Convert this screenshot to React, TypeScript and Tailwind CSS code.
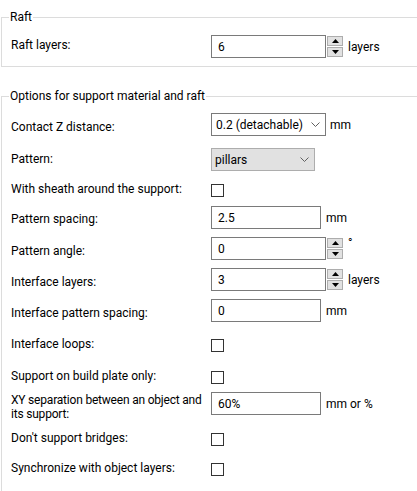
import React from 'react';

const Chevron = () => (
  <svg width="9" height="5" viewBox="0 0 9 5" className="shrink-0">
    <path d="M0.5 0.5 L4.5 4.5 L8.5 0.5" fill="none" stroke="#606060" strokeWidth="1" />
  </svg>
);

const Spin = () => (
  <div className="ml-[1px] flex flex-col gap-[1px]">
    <div className="flex h-[10px] w-[16px] items-center justify-center border border-[#adadad] bg-[#e1e1e1]">
      <svg width="7" height="4" viewBox="0 0 7 4"><path d="M0 4 L3.5 0 L7 4 Z" fill="#000" /></svg>
    </div>
    <div className="flex h-[10px] w-[16px] items-center justify-center border border-[#adadad] bg-[#e1e1e1]">
      <svg width="7" height="4" viewBox="0 0 7 4"><path d="M0 0 L3.5 4 L7 0 Z" fill="#000" /></svg>
    </div>
  </div>
);

const TextBox = ({ value, w }: { value: string; w: string }) => (
  <div className={`flex h-[23px] items-center border border-[#7a7a7a] bg-white px-[6px] ${w}`}>{value}</div>
);

const Check = () => <div className="h-[13px] w-[13px] border border-[#333333] bg-white" />;

const Unit = ({ children }: { children: React.ReactNode }) => (
  <span className="ml-[5px] leading-[16px]">{children}</span>
);

interface RowProps {
  label: React.ReactNode;
  h: string;
  lPt?: string;
  cPt?: string;
  children: React.ReactNode;
}

const Row = ({ label, h, lPt = '', cPt = '', children }: RowProps) => (
  <div className={`flex ${h}`}>
    <div className={`w-[200px] shrink-0 leading-[16px] ${lPt}`}>{label}</div>
    <div className={`flex items-center self-start ${cPt}`}>{children}</div>
  </div>
);

export default function App() {
  return (
    <div className="h-[491px] w-[417px] overflow-hidden bg-white text-[12px] text-black" style={{ fontFamily: 'Roboto, "Noto Sans", sans-serif' }}>
      <fieldset className="ml-[1px] mt-[9px] border border-r-0 border-[#dcdcdc] pb-[8px] pl-[9px] pt-[10px]">
        <legend className="ml-[-2px] px-[1px] leading-[16px]">Raft</legend>
        <Row label="Raft layers:" h="h-[23px]" lPt="pt-[2px]">
          <TextBox value="6" w="w-[115px]" />
          <Spin />
          <Unit>layers</Unit>
        </Row>
      </fieldset>

      <fieldset className="ml-[1px] mt-[21px] border border-b-0 border-r-0 border-[#dcdcdc] pl-[9px] pt-[9px]">
        <legend className="ml-[-2px] px-[1px] leading-[16px]">Options for support material and raft</legend>

        <Row label="Contact Z distance:" h="h-[35px]" lPt="pt-[6px]">
          <div className="flex h-[23px] w-[115px] items-center justify-between border border-[#7a7a7a] bg-white pl-[4px] pr-[5px]">
            <span>0.2 (detachable)</span>
            <Chevron />
          </div>
          <span className="ml-[4px] leading-[16px]">mm</span>
        </Row>

        <Row label="Pattern:" h="h-[33px]" lPt="pt-[3px]">
          <div className="flex h-[23px] w-[104px] items-center justify-between border border-[#adadad] bg-[#e1e1e1] pl-[3px] pr-[5px]">
            <span>pillars</span>
            <Chevron />
          </div>
        </Row>

        <Row label="With sheath around the support:" h="h-[25px]" cPt="pt-[3px]">
          <Check />
        </Row>

        <Row label="Pattern spacing:" h="h-[31px]" lPt="pt-[5px]">
          <TextBox value="2.5" w="w-[110px]" />
          <Unit>mm</Unit>
        </Row>

        <Row label="Pattern angle:" h="h-[31px]" lPt="pt-[6px]">
          <TextBox value="0" w="w-[115px]" />
          <Spin />
          <span className="ml-[5px] self-start leading-[12px]">°</span>
        </Row>

        <Row label="Interface layers:" h="h-[31px]" lPt="pt-[6px]">
          <TextBox value="3" w="w-[115px]" />
          <Spin />
          <Unit>layers</Unit>
        </Row>

        <Row label="Interface pattern spacing:" h="h-[37px]" lPt="pt-[6px]">
          <TextBox value="0" w="w-[110px]" />
          <Unit>mm</Unit>
        </Row>

        <Row label="Interface loops:" h="h-[32px]" cPt="pt-[3px]">
          <Check />
        </Row>

        <Row label="Support on build plate only:" h="h-[24px]" cPt="pt-[3px]">
          <Check />
        </Row>

        <Row
          label={<div className="leading-[14px] tracking-[-0.2px]">XY separation between an object and its support:</div>}
          h="h-[38px]"
          lPt="pt-[1px]"
        >
          <TextBox value="60%" w="w-[110px]" />
          <Unit>mm or %</Unit>
        </Row>

        <Row label="Don't support bridges:" h="h-[30px]" cPt="pt-[3px]">
          <Check />
        </Row>

        <Row label="Synchronize with object layers:" h="h-[31px]" cPt="pt-[3px]">
          <Check />
        </Row>
      </fieldset>
    </div>
  );
}
